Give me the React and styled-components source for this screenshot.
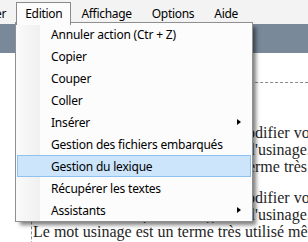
import React from 'react'
import styled, { createGlobalStyle } from 'styled-components'

const GlobalStyle = createGlobalStyle`
  html, body {
    margin: 0;
    padding: 0;
    background: #ffffff;
  }
  body {
    font-family: "Noto Sans", "Liberation Sans", sans-serif;
  }
`

const Window = styled.div`
  position: relative;
  width: 308px;
  height: 242px;
  overflow: hidden;
  background: #ffffff;
`

const MenuBar = styled.div`
  display: flex;
  align-items: flex-end;
  height: 24px;
  margin-left: -39px;
  background: #f3f3f3;
  font-size: 12px;
  letter-spacing: -0.3px;
  color: #000000;
`

const BarItem = styled.div`
  position: relative;
  z-index: 3;
  display: flex;
  align-items: center;
  padding: 0 ${p => (p.$open ? '8px' : '9px')};
  box-sizing: border-box;
  border: 1px solid ${p => (p.$open ? '#8a8a8a' : 'transparent')};
  border-bottom: none;
  background: ${p => (p.$open ? '#fcfcfc' : 'transparent')};
  margin-bottom: ${p => (p.$open ? '-1px' : '0')};
  height: ${p => (p.$open ? '23px' : '22px')};
  padding-bottom: ${p => (p.$open ? '1px' : '0')};
`

const Toolbar = styled.div`
  height: 29px;
  background: #7a899a;
`

const Document = styled.div`
  padding-top: 29px;
`

const Page = styled.div`
  margin-left: 31px;
  border-top: 1px dashed #8a8a8a;
  border-left: 1px dashed #8a8a8a;
  padding: 41px 0 0 1px;
  height: 200px;
  font-family: "Liberation Serif", "Times New Roman", serif;
  font-size: 16px;
  line-height: 17px;
  color: #262626;
`

const Paragraph = styled.div`
  margin-bottom: 14px;
`

const Line = styled.div`
  display: flex;
  white-space: nowrap;
`

const Lead = styled.span`
  flex: none;
  width: 222px;
  overflow: hidden;
  text-align: right;
  direction: rtl;
`

const Menu = styled.div`
  position: absolute;
  z-index: 2;
  top: 22px;
  left: 15px;
  width: 238px;
  box-sizing: border-box;
  border: 1px solid #8f8f8f;
  background: linear-gradient(to right, #fafafa 0, #f0f0f0 24px, #fcfcfc 24px);
  box-shadow: 4px 4px 4px -1px rgba(0, 0, 0, 0.5);
  font-size: 12px;
  color: #000000;
`

const Item = styled.div`
  display: flex;
  align-items: center;
  justify-content: space-between;
  height: 22px;
  box-sizing: border-box;
  margin: 0 1px;
  padding: 0 9px 0 33px;
  border: 1px solid ${p => (p.$active ? '#90c2ef' : 'transparent')};
  background: ${p => (p.$active ? '#cce5fb' : 'transparent')};
`

const Label = styled.span`
  letter-spacing: -0.2px;
`

const Arrow = styled.span`
  width: 0;
  height: 0;
  border-left: 4px solid #000000;
  border-top: 3.5px solid transparent;
  border-bottom: 3.5px solid transparent;
`

const items = [
  { label: 'Annuler action (Ctr + Z)' },
  { label: 'Copier' },
  { label: 'Couper' },
  { label: 'Coller' },
  { label: 'Insérer', sub: true },
  { label: 'Gestion des fichiers embarqués' },
  { label: 'Gestion du lexique', active: true },
  { label: 'Récupérer les textes' },
  { label: 'Assistants', sub: true },
]

const App = () => (
  <Window>
    <GlobalStyle />
    <MenuBar>
      <BarItem>Fichier</BarItem>
      <BarItem $open>Edition</BarItem>
      <BarItem>Affichage</BarItem>
      <BarItem>Options</BarItem>
      <BarItem>Aide</BarItem>
    </MenuBar>
    <Toolbar />
    <Document>
      <Page>
        <Paragraph>
          <Line>
            <Lead>Les techniques permettent de mo</Lead>
            <span>difier votre texte</span>
          </Line>
          <Line>
            <Lead>selon les règles propres à l</Lead>
            <span>'usinage.</span>
          </Line>
          <Line>
            <Lead>Le mot usinage est un te</Lead>
            <span>rme très utilisé</span>
          </Line>
        </Paragraph>
        <Paragraph>
          <Line>
            <Lead>Les techniques permettent de mo</Lead>
            <span>difier votre texte</span>
          </Line>
          <Line>
            <Lead>Les techniques analogues à l</Lead>
            <span>'usinage.</span>
          </Line>
          <Line>Le mot usinage est un terme très utilisé même</Line>
        </Paragraph>
      </Page>
    </Document>
    <Menu>
      {items.map(item => (
        <Item key={item.label} $active={item.active}>
          <Label>{item.label}</Label>
          {item.sub && <Arrow />}
        </Item>
      ))}
    </Menu>
  </Window>
)

export default App
